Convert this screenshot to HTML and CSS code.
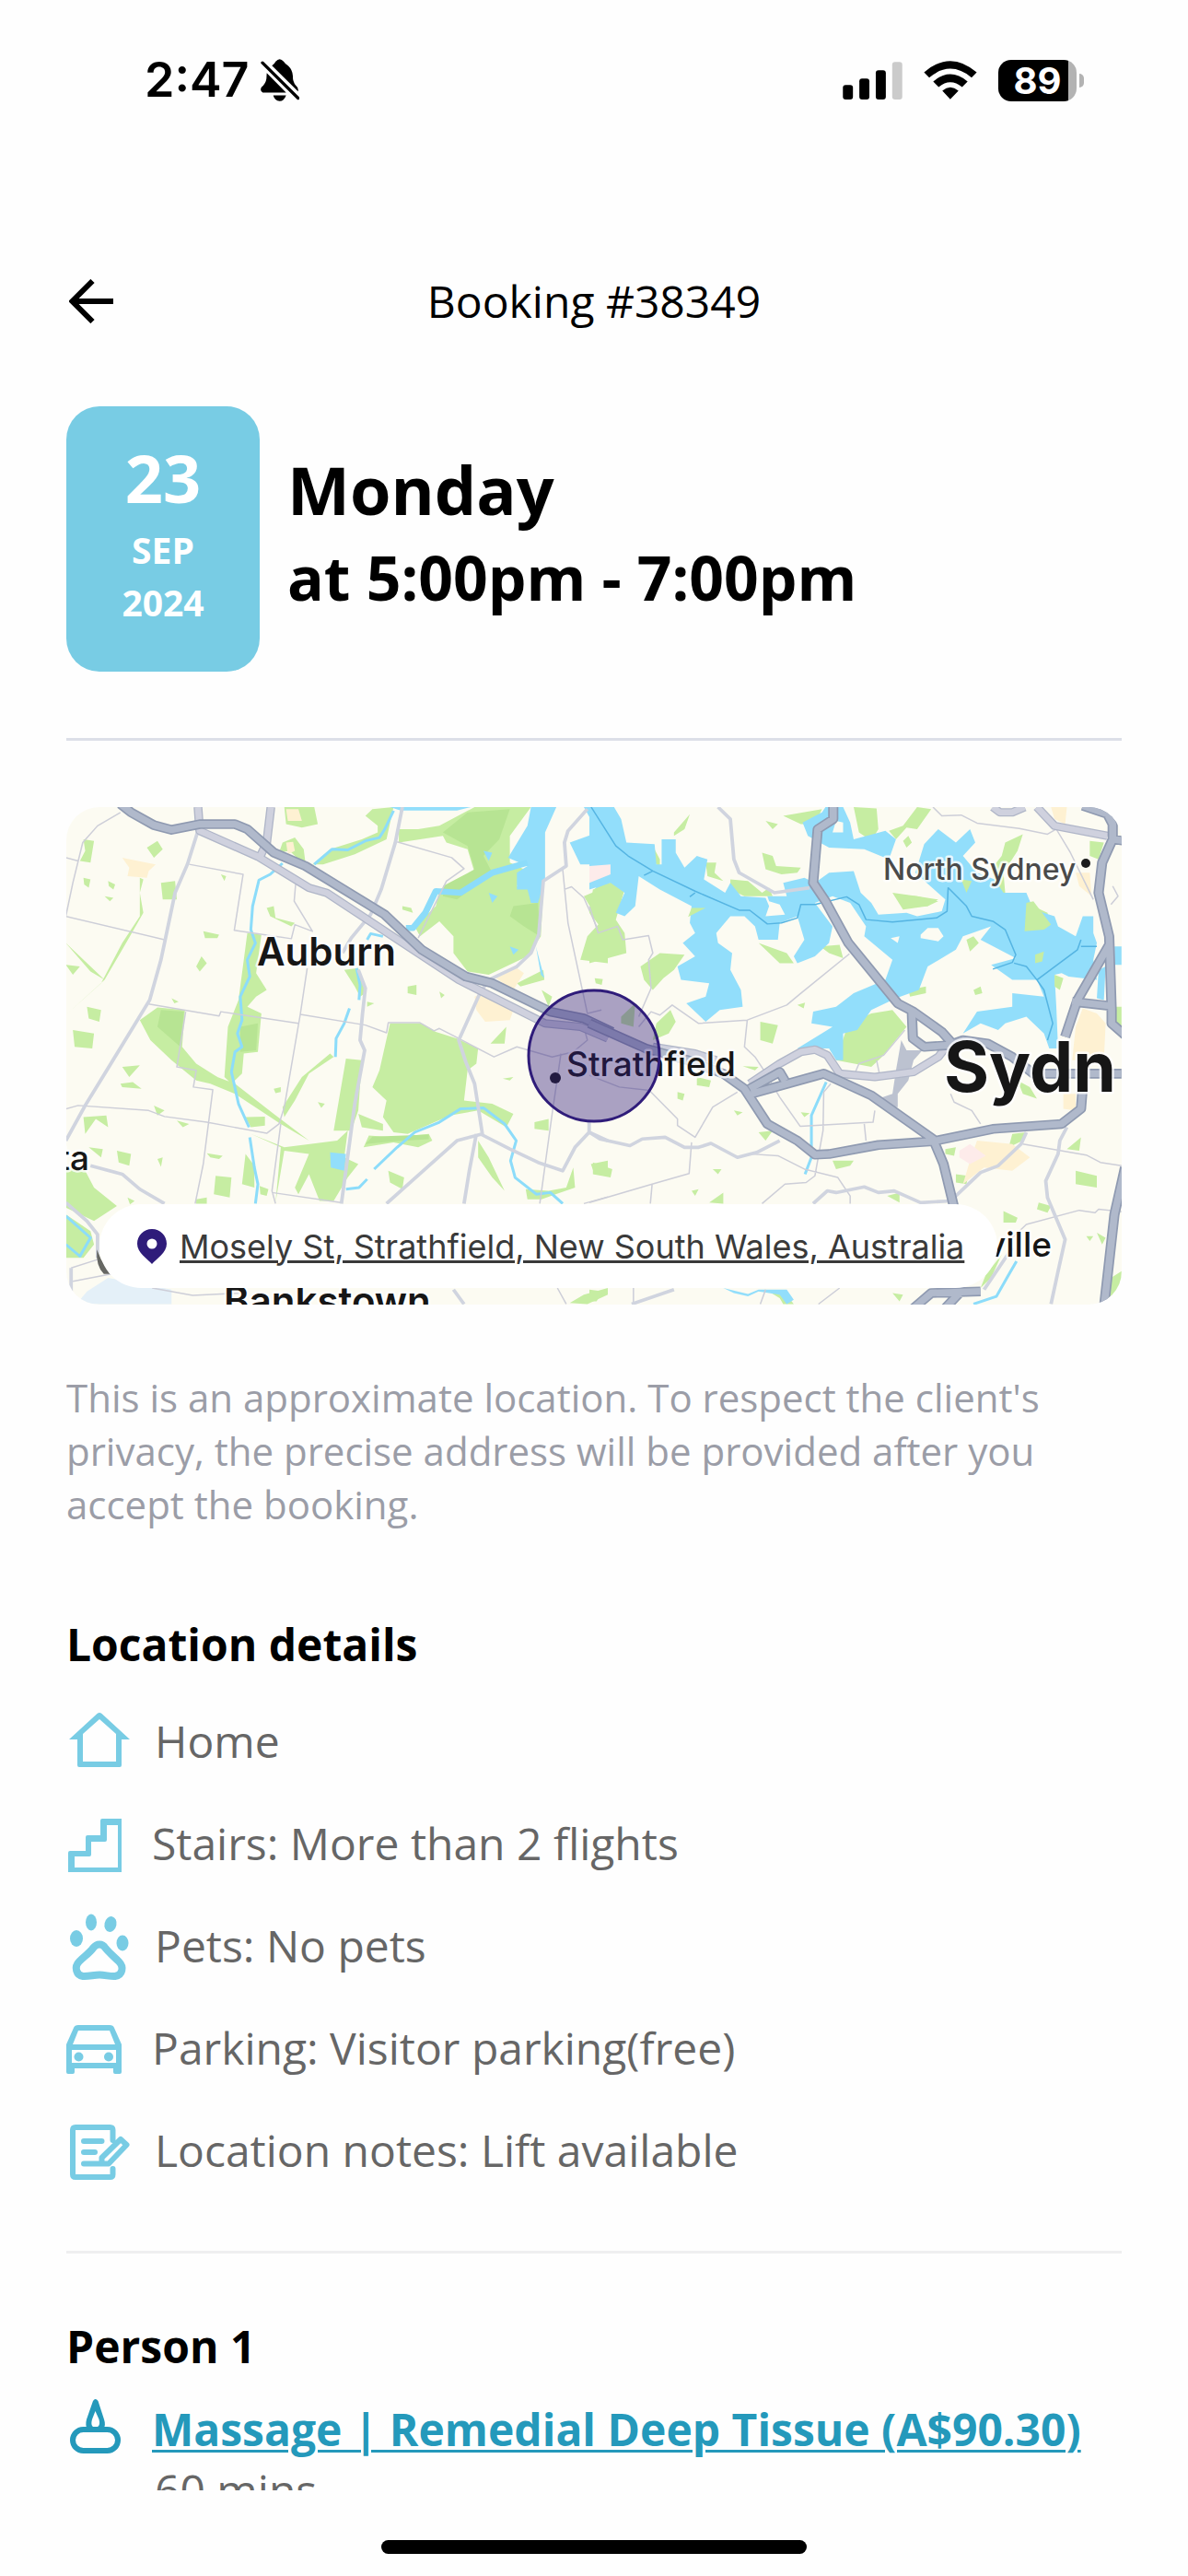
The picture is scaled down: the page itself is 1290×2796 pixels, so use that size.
FILE: index.html
```html
<!DOCTYPE html>
<html lang="en">
<head>
    <meta charset="UTF-8">
    <meta name="viewport" content="width=device-width, initial-scale=1.0">
    <title>Booking #38349</title>
    <link rel="stylesheet" href="styles.css">
</head>
<body>
    <div class="status-bar">
        <div class="status-left">
            <span class="time">2:47</span>
            <svg class="bell" viewBox="668 45 126 137">
                <path d="M705 66Q714 60 717 53Q730 38 743 53Q747 60 758 67Q772 80 773 100Q772 118 782 130Q792 138 790 150ZM688 90L751 154H675Q664 148 671 136Q685 124 687 108ZM709 163H751Q744 182 730 182Q714 181 709 163Z"/>
                <path d="M674 57L790 172" stroke="#000" stroke-width="10" stroke-linecap="round"/>
            </svg>
        </div>
        <div class="status-right">
            <svg class="signal" viewBox="228 77 195 124">
                <rect x="228" y="153" width="33" height="48" rx="9"/>
                <rect x="282" y="132" width="33" height="69" rx="9"/>
                <rect x="336" y="105" width="33" height="96" rx="9"/>
                <rect x="390" y="78" width="33" height="123" rx="9" fill="#cbcbcb"/>
            </svg>
            <svg class="wifi" viewBox="491 75 173 127">
                <path d="M491 113Q577 38 664 113L647 130Q577 72 508 130ZM521 143Q577 95 634 143L616 161Q577 130 539 161ZM551 173Q577 151 604 173L577 201Z"/>
            </svg>
            <div class="battery"><span>89</span></div>
        </div>
    </div>

    <header class="header">
        <button class="back" aria-label="Back">
            <svg viewBox="0 0 48 48"><path d="M25.500 2L3.500 24L25.500 46M3.500 24H48"/></svg>
        </button>
        <h1>Booking #38349</h1>
    </header>

    <main class="content">
        <section class="date-row">
            <div class="date-card">
                <span class="day">23</span>
                <span class="month">SEP</span>
                <span class="month">2024</span>
            </div>
            <div class="date-text">
                <p class="weekday">Monday</p>
                <p class="hours">at 5:00pm - 7:00pm</p>
            </div>
        </section>

        <hr class="divider">

        <section class="map">
            <svg class="map-canvas" viewBox="0 0 1146 540" preserveAspectRatio="xMidYMid slice">
                <rect width="1146" height="540" fill="#fcfbf2"/>

                <!-- west half: parks, water -->
                <g transform="translate(-12 -16) scale(.38265 .36352)">
                    <path class="park" d="M880 70L900 50L960 44L940 140L850 185L760 215L730 215L780 170L870 140L915 120L915 100ZM650 44L735 44L745 95L700 105L655 95ZM635 180L645 150L680 135L705 170L710 210L690 200L665 175ZM1090 100L1190 44H1350L1290 130L1290 210L1330 230L1310 280L1385 290L1378 430L1340 490L1230 545L1170 535L1130 480L1130 430L1090 385L1035 430L1020 400L1080 340L1090 290L1190 240L1170 170L1110 150L1100 130L975 150V110H1030ZM1310 570L1385 530L1388 560L1320 580Z"/>
                    <path class="park" d="M240 680L290 642L368 650L360 760L400 810L460 850L510 870L620 960L720 1040L640 990L510 900L440 870L400 860L330 800L270 740ZM545 420L585 425L570 540L600 590L570 610L545 640L585 660L575 775L535 780L530 840L500 870L480 850L490 700L520 620ZM950 690L1040 690L1080 715L1140 735L1200 765L1195 810L1170 830L1160 920L1240 930L1300 960L1280 1000L1200 950L1120 965L1000 1020L960 1015L930 970L940 920L900 880L920 830ZM825 795L870 800L860 950L840 1010L790 1010ZM780 780L790 790L720 840L680 920L650 970L645 940L700 850ZM820 530L860 525L880 600L865 610L850 580ZM875 1060L890 1025L960 1030L1060 1020L1070 1040L1030 1060L960 1045ZM555 1020L650 1060L800 1040L830 1010L820 1090L860 1110L830 1150L790 1220L750 1220L720 1140L690 1200L680 1180L720 1080L650 1070L625 1225L640 1060ZM1200 1040L1230 1090L1275 1190L1240 1150L1200 1090ZM540 1080L565 1115V1180L530 1170ZM455 1145L500 1150L495 1210L450 1200ZM30 1120L85 1130L110 1180L175 1235L110 1280L30 1240Z"/>
                    <path class="park" d="M80 140L110 145L100 210L70 205L85 175ZM260 165L290 145L305 170L280 195ZM300 270L340 265L345 320L305 320ZM240 255L250 260L240 300L250 360L190 470L140 560L30 665L130 570L190 450L240 370ZM30 450L140 560L100 535ZM30 515L70 520L50 545ZM90 640L130 650L125 685L95 675ZM50 710L110 720L105 765L55 760ZM190 820L240 815L210 850ZM185 870L220 865L245 885L190 880ZM280 935L310 950L290 965ZM80 970L145 965L150 1000L115 975L85 1020ZM175 1070L215 1080L210 1115L180 1105ZM95 1060L135 1065L130 1090ZM420 415L465 425L460 435H425ZM400 520L415 490L430 510L410 535ZM600 345L620 340L625 375L680 390L670 400L610 370ZM1000 580L1025 575L1025 605L1000 600ZM1090 595L1105 605L1095 615ZM1235 750L1280 700L1275 750ZM1270 855L1300 850L1290 860ZM860 960L930 990L930 1010L870 1000ZM945 1130L990 1150L985 1185L950 1165ZM1360 985L1400 975V1010L1360 1005ZM1470 1120L1475 1180L1420 1200L1380 1215H1340L1335 1185L1400 1190L1450 1180ZM1520 1110L1568 1100V1145L1530 1140ZM1490 500L1510 430L1545 390L1500 310L1568 280V510ZM1568 1480L1500 1500L1460 1525L1510 1528L1568 1500ZM30 1260L100 1310L110 1350L80 1390H30ZM540 970L595 968V995L555 1000Z"/>
                    <path class="park" d="M80 255L100 260L95 285L82 275ZM150 265L170 275L165 290L152 280ZM140 310L165 315L155 325ZM470 245L485 250L480 265ZM430 1078L475 1085L465 1095L440 1090ZM345 980L380 990L362 1000ZM290 1095L305 1090L300 1118ZM400 1215L430 1210V1228H400ZM205 1210L225 1220L212 1230ZM580 1175L605 1185L600 1205L582 1200ZM745 925L765 930L755 942ZM620 885L640 880V895L625 898ZM330 615L350 625L338 630ZM885 625L905 630L885 640ZM985 340L1010 345L1015 360L985 350ZM405 835L460 850L455 860H410ZM920 885L940 895L935 910ZM1380 590L1410 610L1400 640Z"/>
                    <path class="forest" d="M1170 60L1290 50L1260 140L1215 190L1240 240L1190 280L1140 320L1100 310L1100 280L1190 230L1170 160L1100 120ZM1300 340L1370 330L1375 430L1330 400L1290 370ZM300 650L365 655L355 760L290 700ZM525 700L575 690L570 770L525 775ZM880 1050L900 1028L1060 1022L1060 1036L960 1042Z"/>
                    <path class="urban" d="M190 195L235 205L285 215L265 235L260 255L205 250L210 225ZM655 150L675 148L680 175L660 185ZM1190 610L1230 590L1300 650L1290 680L1220 685L1195 650ZM1250 555L1310 525L1330 540L1300 590ZM655 50L690 50L700 85H660Z"/>
                    <path fill="#e4f0f8" d="M150 1450L330 1485L330 1528H60L90 1490Z"/>
                    <path class="water" d="M950 44H1180L1140 54H980ZM1350 44H1422L1390 120V260L1370 330L1350 330L1340 290H1310V240L1340 220L1285 195L1340 100ZM780 1075L825 1080L820 1130L782 1120ZM1215 175L1240 180L1230 205ZM1230 300L1255 310L1240 330ZM1290 460L1315 470L1300 485ZM1364 460L1388 555L1378 545ZM1500 44H1568V215L1490 215L1460 150L1540 120ZM1568 240L1530 290L1568 285Z"/>
                    <g class="stream">
                        <path d="M960 55L935 110L920 135L880 145L830 172L785 170L735 215M645 212L610 245L578 262L560 340L555 410L568 450L545 500L552 550L525 610L530 680L517 720L530 760L510 775L500 835L520 930L550 1000M552 1030L565 1120L575 1170L568 1228M855 525L865 575L862 620M835 645L820 690L797 735L795 790M885 440L895 422L930 430M905 1125L970 1060L1020 1015L1090 985L1150 945L1215 942L1275 990L1308 1040L1292 1100L1305 1150L1365 1200L1405 1195L1440 1228M825 1185L862 1180L885 1155M30 1265L100 1330L70 1385L30 1350"/>
                        <path class="wide" d="M1340 210L1240 240L1150 300L1080 295L1050 360L1015 405H995"/>
                    </g>
                    <g class="minor">
                        <path d="M185 60L120 100L78 150L50 270L30 370L310 440M30 195L65 205M380 215L533 245L508 412L670 437L680 395L730 415L678 325L682 275M265 632L465 668L470 655L690 690M715 525L695 665L650 940L635 990L600 1018L430 985L310 968L265 950L65 935L30 945M370 655L345 820L400 830L392 880L447 888L420 1110L397 1228M695 663L880 695L940 718L945 688H1035L1075 712L1090 705L1145 735L1245 790L1310 760L1410 790L1470 775L1510 740L1500 700M640 990L615 1190L625 1228M615 1195L810 1225M970 148L1125 195L1160 228L1110 265L1030 435M1440 230L1455 390L1510 660L1550 650M1445 290L1465 282L1500 315L1540 410M1435 780L1410 960L1375 1228M1500 1228L1568 1208M50 1460L200 1430M275 1480L390 1502L530 1495M1425 1480L1450 1528M45 1420L120 1395M1536 425H1568"/>
                    </g>
                    <g class="road">
                        <path d="M405 115L375 215L340 300L300 500L268 620L155 815L85 935L30 1040M985 44L965 150L925 290L895 365L840 435L815 480M860 530L880 585L872 660L865 740L878 770L850 930L812 1228M1510 50L1455 115L1445 150L1450 220L1385 265L1372 425L1350 480L1310 520L1230 560L1205 600L1145 740L1165 805L1190 870L1212 1020L1140 1040L940 1228M1195 1020L1175 1130L1160 1228M1210 1022L1290 1065L1370 1105L1440 1130L1475 1060L1515 1015L1568 1040M1515 980V1015M100 1115L190 1140L240 1185L310 1228M30 1225L90 1280L120 1320V1390M45 1420V1500M1130 1485L1160 1528"/>
                    </g>
                    <g class="trunk-case"><path d="M405 44L410 115L575 192L720 285L770 300L900 390L1145 560L1390 690L1490 700L1568 735M612 44L600 150L580 195"/></g>
                    <g class="trunk"><path d="M405 44L410 115L575 192L720 285L770 300L900 390L1145 560L1390 690L1490 700L1568 735M612 44L600 150L580 195"/></g>
                    <g class="highway-case"><path d="M185 35L215 60L280 98L330 112L410 95L510 95L545 110L620 180L710 220L800 278L935 365L1040 470L1165 550L1240 570L1405 655L1500 675L1580 715"/></g>
                    <g class="highway"><path d="M185 35L215 60L280 98L330 112L410 95L510 95L545 110L620 180L710 220L800 278L935 365L1040 470L1165 550L1240 570L1405 655L1500 675L1580 715"/></g>
                    <path fill="#666763" d="M118 1365L130 1395L155 1438H138Q115 1415 118 1365Z"/>
                </g>

                <!-- east half: harbour -->
                <g transform="translate(568 -16) scale(.38265 .36352)">
                    <path class="park" d="M550 70L660 50L640 95H600ZM750 44L815 48L820 110L800 145L765 120ZM850 115L890 100L930 44L970 50L930 110L900 105L870 140ZM20 170L50 150L65 200L15 215ZM10 290L70 265L100 290L75 380L100 420L105 480L0 510V430L30 400L0 360ZM145 520L200 480L270 485L240 530L210 555L180 590L155 560ZM180 160L200 200V230L180 200ZM330 210H360L355 240L380 265L335 250ZM400 260L450 265L490 300L510 285L520 310L440 310L400 290ZM490 180L520 190L530 220L600 225L590 240L545 245L500 230ZM700 800L735 690L800 660L860 650L900 700L830 790L800 820ZM480 450L560 480L580 510L540 510ZM655 460L710 455L720 495L680 480ZM860 300L930 310L990 320L960 340L890 350ZM940 405L990 400L1000 410L950 415ZM1070 440L1090 430L1105 450L1080 475ZM1180 150L1230 125L1215 175L1175 240L1180 300H1160L1140 230L1170 190ZM1240 330L1300 360L1310 395L1235 415ZM240 120L285 65L270 110L240 130ZM500 85L535 95L520 110ZM890 145L905 130L915 150L900 165ZM485 685L535 695L520 750L485 740ZM190 690L230 650L245 685L225 720L180 740ZM90 670L130 630L125 700L90 690ZM10 1105L65 1125L60 1150L10 1140ZM340 1225L380 1195V1228ZM350 1125L375 1125L365 1140ZM290 1190L310 1185L300 1205ZM480 1015L520 1010L500 1040ZM600 955L625 958L610 970ZM410 950L435 955L420 965ZM690 1100L750 1100L740 1115L700 1125ZM845 1205L880 1195V1225ZM1010 1065L1040 1060L1035 1085L1010 1080ZM1040 1140L1075 1145L1070 1170L1040 1165ZM1355 1065L1395 1030L1390 1070ZM1380 1130L1440 1145L1440 1180L1380 1170ZM1175 1250L1215 1270L1210 1285H1175ZM1275 1225L1310 1235L1300 1255L1270 1245ZM1410 1325L1430 1325L1420 1340ZM1440 1315L1465 1330L1455 1350ZM1170 1380L1140 1450L1110 1480L1125 1440ZM1200 1020L1240 1015L1230 1040L1190 1060ZM1510 1430V1528H1470L1480 1450ZM1490 640H1510V710L1490 690ZM1420 145L1460 150L1445 200L1420 190ZM500 1485L560 1500L580 1528H550L540 1510ZM0 1485L40 1490L20 1520H0ZM860 1495L890 1500L880 1520ZM1215 860L1250 880L1270 915L1230 900ZM250 895L270 900L265 920L250 915ZM305 850L345 860L340 880L305 875ZM15 555L38 558L35 575L18 570ZM590 635L612 628L608 645ZM435 818L480 820L470 830ZM905 590L955 580V600L910 610ZM1090 590L1110 580L1115 600L1095 605Z"/>
                    <path class="water" d="M0 44H70L90 80L105 150L185 155L190 215H205V140H245V180L270 225L305 190L335 200L325 260L385 300L400 270L430 310L500 315L510 340L500 370L555 365L540 335L510 325L505 310L560 310L550 270L610 255L640 270L680 240L750 235L770 300L800 330L820 365L900 360L930 370L1000 355L1010 320L925 240L950 155L990 110L1040 150L1080 110L1095 150L1060 190L1100 240L1150 260L1175 300L1240 300L1260 350L1320 370L1330 400L1380 430L1400 370H1430V420L1440 450L1430 500L1440 560L1360 550L1340 540L1320 545L1325 640L1330 765H1305L1290 720L1240 670L1180 690L1160 710L1110 690L1060 720L1100 655L1200 640V600L1290 610L1270 560L1200 560L1140 515L1210 495L1110 440L1140 400L1060 430L1040 470L960 520L935 590L870 615L800 650L760 710L720 720V800L700 800L680 765L590 765L690 700L630 690L635 655L700 640L750 600L840 560L860 500L780 430L785 400L740 330L690 310L640 330L690 400L680 450L640 490L590 510L580 490L610 440L590 370L540 390L535 440L480 440L470 400L440 370L400 370L360 420L365 450L405 480L400 530L430 590L435 640L370 650L330 685L275 630L330 610L340 570L260 560L250 520L300 490L265 450L300 420L285 390L290 340L200 290L140 250L130 340L100 370L75 360L100 300L60 270L0 290ZM605 90L660 60L670 44H720L740 90L750 140L840 115L870 140L850 200L780 170L680 165L620 130Z"/>
                    <path fill="#fcfbf2" d="M940 425L960 405H990L1005 430L990 445L940 435ZM855 435L880 430L875 450ZM690 120L700 85L720 90V120Z"/>
                    <path class="park" d="M1240 330L1260 325L1310 395L1290 410L1235 415ZM1265 485L1290 475L1285 505L1265 510ZM865 305L930 310L990 325L960 340L890 345ZM1320 545L1345 555L1335 590L1320 580ZM1055 260L1085 265L1070 300ZM290 345L330 345L280 372Z"/>
                    <path class="urban" d="M1310 44H1355L1350 95L1320 80ZM1380 240L1420 240L1425 310L1390 280ZM1400 645L1440 660L1465 690L1460 800H1370L1380 700ZM1345 900L1380 900V950L1345 945ZM1100 1040L1200 1050L1250 1090L1200 1130L1120 1120L1060 1170L1080 1100Z"/>
                    <path fill="#fdebea" d="M0 220L60 215V245L0 270ZM1050 1070L1080 1050L1125 1085L1080 1110L1050 1090Z"/>
                    <path class="water" d="M380 1480L450 1498L480 1485L560 1485L580 1515L560 1528L540 1500L480 1490L450 1505L410 1495ZM1445 530L1465 520L1460 620L1440 615ZM1490 460H1510V515H1490Z"/>
                    <g class="ferry">
                        <path d="M5 44L75 160L110 190L180 235L300 295L425 352L455 352L505 393L545 390L590 375L600 335L640 335L730 312L765 335L785 380L860 387L985 375L1015 355L1018 285L1070 340L1085 370L1145 385L1180 410L1210 485L1200 508L1145 528M1205 510L1240 520L1270 560L1290 590L1315 690L1300 740M1270 560L1385 470L1395 440M1395 460H1440M155 248L180 235M285 312L300 300"/>
                    </g>
                    <g class="stream"><path d="M672 865L630 965V1090L612 1140M1212 1400L1190 1440L1155 1505L1090 1528"/></g>
                    <g class="minor">
                        <path d="M0 340L25 420L80 400L95 440L168 428L180 480L168 500L175 585L140 670M140 700L175 655L200 665L235 635L310 690L448 680L560 635L600 600L738 482M448 680L440 760L470 790L495 830L540 910L598 997L805 985L810 950M685 870L665 895L663 1010L640 1145L615 1165L555 1170L490 1228M0 845L85 880L170 890L250 975L250 995L300 1030L350 940L420 895M290 1045L283 1138L178 1170L0 1225M178 1170L173 1228M780 990L785 1040M460 1080L535 1085L610 1125L705 1150L740 1205V1228M1025 900L1035 925L1085 950L1110 990M975 44L1000 70L1055 68L1100 92L1220 108L1300 125L1325 110L1365 180L1430 320M1230 1050L1410 1083L1450 1105L1510 1115M1200 1330L1240 1290L1390 1248L1435 1255L1445 1245L1510 1252M755 835L765 810L835 785L895 710M1485 280L1500 310L1480 335M815 800L825 850M125 1480V1528M485 1528L500 1485M650 1528L710 1480"/>
                    </g>
                    <g class="road">
                        <path d="M365 44L400 80L410 200L425 240L525 300L625 285M0 1015L30 1035L115 1055L150 1035L215 1030L270 1060L310 1060L345 1048L420 1090L475 1075L540 1040M635 1228L675 1190L700 1195L780 1178L820 1195L865 1190L940 1225L1025 1220L1110 1135L1160 1115L1225 1050L1240 1015M1355 1000L1335 1040L1330 1080L1295 1160L1300 1210L1350 1335L1330 1430L1310 1528M120 1528L240 1485M1120 1485L1200 1360"/>
                    </g>
                    <path fill="#bcc2d0" d="M885 740L900 770H945L920 800L905 860L875 900V940H860L820 915L860 900L870 830Z"/>
                    <g class="trunk-case"><path d="M180 760L300 780L360 800M455 870L540 810L600 775L640 768L675 785L710 840L810 850L920 835L990 790L1020 750M1270 44L1320 100L1470 130M1145 44L1165 60H1200L1235 44"/></g>
                    <g class="trunk"><path d="M180 760L300 780L360 800M455 870L540 810L600 775L640 768L675 785L710 840L810 850L920 835L990 790L1020 750M1270 44L1320 100L1470 130M1145 44L1165 60H1200L1235 44"/></g>
                    <g class="highway-case">
                        <path d="M692 40V80L648 110L635 270L670 325L735 450L875 630L920 655L1000 715L1030 750M915 655L918 735L950 760L1020 755L1060 740L1130 750L1200 790L1260 840H1510M0 690L160 765L280 800L380 840L440 885L505 990L590 1040L640 1082L680 1080L820 1053L975 1042L1145 1005L1340 990L1395 945L1400 880M455 885L540 835L555 862M460 900L665 840L800 905L975 1035L1005 1110L1035 1240M1400 40L1470 65L1485 95V140L1455 210L1445 300L1475 430L1482 650V690L1520 725M1475 455L1385 620L1350 730M1370 625L1480 638M1520 1120L1490 1260L1460 1540M920 1540L970 1495L1110 1490M1010 1540L1050 1495M1485 140L1520 145"/>
                    </g>
                    <g class="highway">
                        <path d="M692 40V80L648 110L635 270L670 325L735 450L875 630L920 655L1000 715L1030 750M915 655L918 735L950 760L1020 755L1060 740L1130 750L1200 790L1260 840H1510M0 690L160 765L280 800L380 840L440 885L505 990L590 1040L640 1082L680 1080L820 1053L975 1042L1145 1005L1340 990L1395 945L1400 880M455 885L540 835L555 862M460 900L665 840L800 905L975 1035L1005 1110L1035 1240M1400 40L1470 65L1485 95V140L1455 210L1445 300L1475 430L1482 650V690L1520 725M1475 455L1385 620L1350 730M1370 625L1480 638M1520 1120L1490 1260L1460 1540M920 1540L970 1495L1110 1490M1010 1540L1050 1495M1485 140L1520 145"/>
                    </g>
                </g>

                <g class="place">
                    <text class="suburb" x="207" y="172">Auburn</text>
                    <text class="suburb" x="171" y="551">Bankstown</text>
                    <text class="town" x="543" y="292">Strathfield</text>
                    <text class="town" x="25" y="394" text-anchor="end">ta</text>
                    <text class="town" x="1070" y="488" text-anchor="end">ville</text>
                    <text class="north" x="887" y="79">North Sydney</text>
                    <text class="city" x="953" y="309">Sydn</text>
                </g>
                <circle cx="531" cy="294" r="6" fill="#1c1c1c"/>
                <circle cx="1107" cy="61" r="5" fill="#1c1c1c"/>
                <circle class="area" cx="573" cy="270" r="71"/>
            </svg>
            <a class="address" href="#">
                <svg class="pin" viewBox="0 0 32 38"><path fill-rule="evenodd" d="M16 0C25 0 32 7 32 16C32 26 21 32 16 38C11 32 0 26 0 16C0 7 7 0 16 0ZM16 10.500A5.500 5.500 0 1 0 16 21.500A5.500 5.500 0 1 0 16 10.500Z"/></svg>
                <span>Mosely St, Strathfield, New South Wales, Australia</span>
            </a>
        </section>

        <p class="notice">This is an approximate location. To respect the client's privacy, the precise address will be provided after you accept the booking.</p>

        <h2>Location details</h2>
        <ul class="details">
            <li>
                <svg class="icon" viewBox="0 0 72 66"><path d="M33.500 5Q36 3 38.500 5L69 33H60V61Q60 63 58 63H14Q12 63 12 61V33H3ZM36 11L18 27V57H54V27Z"/></svg>
                <span>Home</span>
            </li>
            <li>
                <svg class="icon icon-sm" viewBox="0 0 69 66"><path d="M2 66V45Q2 43 4 43H21V28Q21 26 23 26H37V10Q37 8 39 8H60V66ZM9 61H56V15H44V31Q44 33 42 33H27V47Q27 49 25 49H9Z"/></svg>
                <span>Stairs: More than 2 flights</span>
            </li>
            <li>
                <svg class="icon" viewBox="0 0 72 66">
                    <ellipse cx="11" cy="27" rx="7" ry="9"/>
                    <ellipse cx="27" cy="9.500" rx="6" ry="9"/>
                    <ellipse cx="48" cy="11.500" rx="6.500" ry="8.500" transform="rotate(12 48 11.500)"/>
                    <ellipse cx="61" cy="32" rx="6.500" ry="8.500"/>
                    <path class="line thick" d="M36 33.500Q32 33.500 29 37.500C25 43 20 46 14 52C8 58 11 67 18 68C24 68.500 30 66.500 36 66.500C42 66.500 48 68.500 53 68C61 67 63 58 57 52C51 46 47 43 42.500 37.500Q40 33.500 36 33.500Z"/>
                </svg>
                <span>Pets: No pets</span>
            </li>
            <li>
                <svg class="icon icon-sm" viewBox="0 0 69 66">
                    <path d="M13 10H47Q51 10 52 13L60 31V61Q60 63 58 63H53Q51 63 51 61V57H9V61Q9 63 7 63H2Q0 63 0 61V31L8 13Q9 10 13 10ZM13 16L7 31H53L47 16ZM6 37V51H54V37Z"/>
                    <circle cx="13.500" cy="44.500" r="5"/>
                    <circle cx="46" cy="44.500" r="5"/>
                </svg>
                <span>Parking: Visitor parking(free)</span>
            </li>
            <li>
                <svg class="icon" viewBox="0 0 72 66"><path class="line" d="M50.500 24V13Q50.500 10 47.500 10H10Q7 10 7 13V61Q7 64 10 64H47.500Q50.500 64 50.500 61V55M19 25H38.500M19 37H31M19 49.500H46L65.500 29L59 23L38.500 43V49"/></svg>
                <span>Location notes: Lift available</span>
            </li>
        </ul>

        <hr class="divider light">

        <h2>Person 1</h2>
        <div class="service">
            <svg class="icon icon-sm dark" viewBox="0 0 69 66">
                <rect class="line" x="7" y="35" width="49" height="23" rx="11.500"/>
                <path d="M29 4Q31.500 0 34.500 4L41 24Q43 30 40.500 34H22.500Q20.500 30 22 24ZM31.500 15L28 24C26 31 29 32.500 31.500 32.500C34 32.500 37.500 31 35.500 24Z"/>
            </svg>
            <a href="#">Massage | Remedial Deep Tissue (A$90.30)</a>
        </div>
        <p class="duration">60 mins</p>
    </main>

    <footer class="home-area"><div class="home-indicator"></div></footer>
</body>
</html>
```

FILE: styles.css
```css
* {
    margin: 0;
    padding: 0;
    box-sizing: border-box;
}
body {
    font-family: 'Open Sans', sans-serif;
    font-size: 48px;
    line-height: 70px;
    height: 100vh;
    display: flex;
    flex-direction: column;
    overflow: hidden;
    background-color: #fefefe;
    color: #000;
}
svg {
    display: block;
    flex-shrink: 0;
}

/* status bar */
.status-bar {
    flex-shrink: 0;
    display: flex;
    justify-content: space-between;
    align-items: center;
    height: 174px;
    padding: 0 113px 0 157px;
    font-family: Inter, sans-serif;
}
.status-left,
.status-right {
    display: flex;
    align-items: center;
}
.status-left {
    gap: 12px;
}
.status-right {
    gap: 23px;
}
.time {
    font-size: 52px;
    font-weight: 600;
}
.bell {
    width: 42px;
    height: 46px;
}
.signal {
    width: 65px;
    height: 41px;
}
.wifi {
    width: 58px;
    height: 42px;
}
.battery {
    position: relative;
    width: 85px;
    height: 45px;
    margin-right: 8px;
    border-radius: 14px;
    background: linear-gradient(to right, #000 76px, #b3b3b3 76px);
    color: #fff;
    font-size: 40px;
    font-weight: 700;
    line-height: 45px;
    text-align: center;
}
.battery::after {
    content: '';
    position: absolute;
    left: 88px;
    top: 15px;
    width: 5px;
    height: 15px;
    border-radius: 0 8px 8px 0;
    background: #b3b3b3;
}

/* header */
.header {
    flex-shrink: 0;
    display: grid;
    grid-template-columns: 72px 1fr 72px;
    align-items: center;
    height: 174px;
    margin-top: 66px;
    padding: 0 72px;
}
.header h1 {
    font-size: 48px;
    font-weight: 400;
    text-align: center;
}
.back {
    padding: 0 3px;
    border: none;
    background: none;
    cursor: pointer;
}
.back svg {
    width: 48px;
    height: 48px;
    fill: none;
    stroke: #000;
    stroke-width: 6;
}

/* content */
.content {
    flex: 1;
    min-height: 0;
    overflow: hidden;
    padding: 27px 72px 0;
}
.date-row {
    display: flex;
    align-items: center;
    gap: 30px;
}
.date-card {
    display: flex;
    flex-direction: column;
    align-items: center;
    width: 210px;
    height: 288px;
    padding-top: 28px;
    border-radius: 36px;
    background: #78cce4;
    color: #fff;
    font-weight: 700;
}
.day {
    font-size: 72px;
    line-height: 99px;
}
.month {
    font-size: 39px;
    line-height: 57px;
}
.date-text {
    padding-bottom: 18px;
    font-weight: 700;
}
.weekday {
    font-size: 72px;
    line-height: 99px;
}
.hours {
    font-size: 66px;
    line-height: 90px;
}
.divider {
    height: 3px;
    margin: 72px 0;
    border: none;
    background: #dcdfe8;
}
.divider.light {
    margin: 74px 0 66px;
    background: #efeff0;
}

/* map */
.map {
    position: relative;
    height: 540px;
    border-radius: 36px;
    overflow: hidden;
}
.map-canvas {
    width: 100%;
    height: 100%;
}
.park { fill: #c6eda2; }
.forest { fill: #b7e493; }
.urban { fill: #fef1d2; }
.water { fill: #92defb; }
.minor,
.road,
.stream,
.ferry,
.trunk,
.trunk-case,
.highway,
.highway-case {
    fill: none;
    stroke-linejoin: round;
}
.minor { stroke: #cdced8; stroke-width: 4; }
.road { stroke: #d0d4df; stroke-width: 10; }
.stream { stroke: #8cdcfa; stroke-width: 8; }
.stream .wide { stroke-width: 18; }
.ferry { stroke: #55b4e2; stroke-width: 4; }
.trunk { stroke: #cfd1de; stroke-width: 18; }
.trunk-case { stroke: #b0b6c8; stroke-width: 25; }
.highway { stroke: #b0b9cb; stroke-width: 20; }
.highway-case { stroke: #8f9ab1; stroke-width: 29; }
.place {
    font-family: Inter, sans-serif;
    fill: #161616;
    stroke: rgba(255, 255, 255, 0.8);
    stroke-width: 5px;
    stroke-linejoin: round;
    paint-order: stroke;
}
.suburb {
    font-size: 42px;
    font-weight: 600;
}
.town {
    font-size: 37px;
    font-weight: 500;
}
.north {
    font-size: 32px;
    font-weight: 500;
    fill: #4a4a4a;
}
.city {
    font-size: 75px;
    font-weight: 700;
}
.area {
    fill: rgba(47, 28, 122, 0.4);
    stroke: #2f1c7a;
    stroke-width: 3;
}
.address {
    position: absolute;
    left: 36px;
    bottom: 18px;
    display: flex;
    align-items: center;
    gap: 14px;
    height: 91px;
    padding: 0 36px 0 41px;
    border-radius: 46px;
    background: #fff;
    color: #3a3a3a;
    font-family: Inter, sans-serif;
    font-size: 36px;
    white-space: nowrap;
    text-decoration-thickness: 3px;
}
.pin {
    width: 32px;
    height: 38px;
    fill: #2f1c7a;
}

.notice {
    margin-top: 72px;
    font-size: 42px;
    line-height: 58px;
    color: #9b9da7;
}
h2 {
    font-size: 48px;
    font-weight: 700;
}
.notice + h2 {
    margin-top: 88px;
}
.details {
    display: flex;
    flex-direction: column;
    gap: 41px;
    margin-top: 35px;
    list-style: none;
    color: #666;
}
.details li,
.service {
    display: flex;
    gap: 24px;
}
.icon {
    width: 72px;
    height: 66px;
    overflow: visible;
    fill: #78cce4;
    fill-rule: evenodd;
    color: #78cce4;
}
.icon-sm {
    width: 69px;
}
.icon.dark {
    fill: #2499bb;
    color: #2499bb;
}
.icon .line {
    fill: none;
    stroke: currentColor;
    stroke-width: 6;
    stroke-linecap: round;
    stroke-linejoin: round;
}
.icon .thick {
    stroke-width: 8;
}
.service {
    margin-top: 20px;
}
.service a {
    color: #2499bb;
    font-weight: 700;
    text-decoration-thickness: 3px;
    text-underline-offset: 4px;
}
.duration {
    padding-left: 96px;
    line-height: 62px;
    color: #666;
}

.home-area {
    flex-shrink: 0;
    height: 93px;
    padding-top: 54px;
}
.home-indicator {
    width: 462px;
    height: 15px;
    margin: 0 auto;
    border-radius: 8px;
    background: #000;
}
```
